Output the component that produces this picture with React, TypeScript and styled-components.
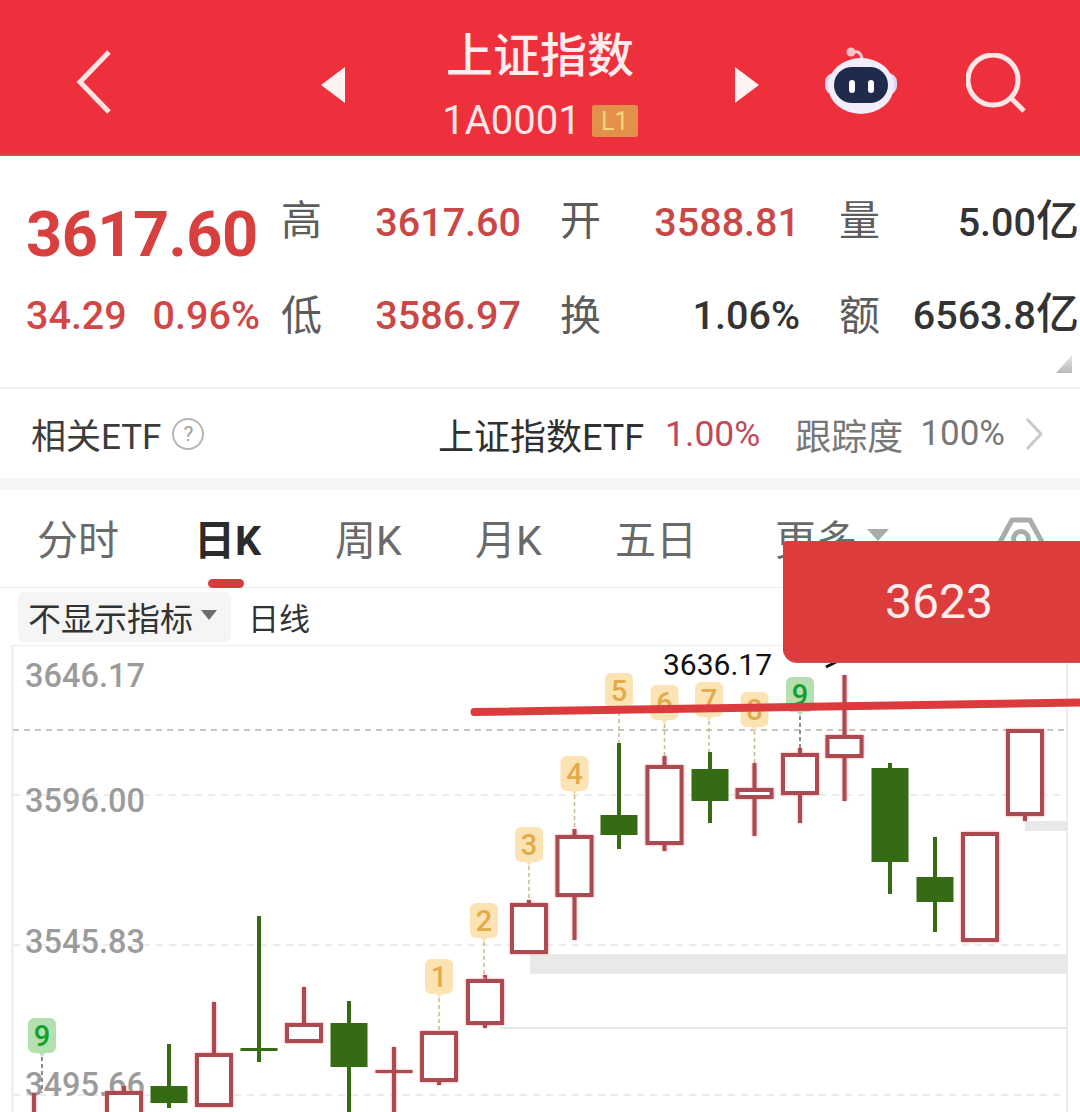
import React from 'react';
import styled, { createGlobalStyle } from 'styled-components';

const GlobalStyle = createGlobalStyle`
    html, body {
        margin: 0;
        padding: 0;
        background: #fff;
    }
    body {
        font-family: Roboto, "Noto Sans CJK SC", sans-serif;
    }
`;

const Page = styled.div`
    position: relative;
    width: 1080px;
    height: 1112px;
    overflow: hidden;
    background: #fff;
`;

const Header = styled.header`
    display: grid;
    grid-template-columns: 245px 24px 390px 90px 141px 1fr;
    align-items: center;
    height: 156px;
    padding: 14px 0 0 76px;
    box-sizing: border-box;
    background: #ee303c;
    box-shadow: inset 0 -2px 0 #d9474f;
`;

const Center = styled.div`
    display: flex;
    flex-direction: column;
    align-items: center;
    align-self: start;
    margin-top: 15px;
`;

const Title = styled.div`
    font-size: 47px;
    line-height: 54px;
    font-weight: 500;
    color: #fdeced;
`;

const CodeRow = styled.div`
    display: flex;
    align-items: center;
    gap: 11px;
    height: 40px;
    margin-top: 18px;
`;

const Code = styled.span`
    font-size: 40px;
    line-height: 40px;
    color: #fde6e7;
`;

const LevelBadge = styled.span`
    display: flex;
    align-items: center;
    justify-content: center;
    width: 46px;
    height: 32px;
    border-radius: 3px;
    background: #e3914a;
    color: #f6d57f;
    font-size: 25px;
`;

const Quote = styled.section`
    display: flex;
    flex-direction: column;
    height: 233px;
    padding: 20px 0 0 26px;
    box-sizing: border-box;
    border-bottom: 2px solid #f0f0f0;
    position: relative;
`;

const QuoteRow = styled.div<{ $height: number }>`
    display: flex;
    align-items: center;
    height: ${p => p.$height}px;
`;

const LeftCell = styled.div`
    display: flex;
    justify-content: space-between;
    width: 234px;
    margin-right: 21px;
`;

const BigPrice = styled.span`
    font-size: 63px;
    font-weight: 700;
    color: #d8403f;
    letter-spacing: -0.5px;
    margin-top: 24px;
`;

const SmallChange = styled.span`
    font-size: 39.5px;
    font-weight: 500;
    color: #d24645;
`;

const Pairs = styled.div`
    display: flex;
    gap: 39px;
`;

const Pair = styled.div`
    display: flex;
    align-items: center;
    justify-content: space-between;
    width: 240px;
`;

const PairLabel = styled.span<{ $lift: number }>`
    font-family: "Noto Sans CJK SC", sans-serif;
    font-size: 41px;
    line-height: 48px;
    padding-bottom: ${p => p.$lift}px;
    color: #5c5c5c;
`;

const PairValue = styled.span<{ $dark?: boolean }>`
    font-size: 39.5px;
    font-weight: 500;
    color: ${p => (p.$dark ? '#333' : '#c94747')};
    white-space: nowrap;
`;

const Unit = styled.span`
    font-size: 43px;
    line-height: 0;
`;

const ExpandCorner = styled.div`
    position: absolute;
    right: 8px;
    bottom: 14px;
    width: 16px;
    height: 18px;
    background: linear-gradient(180deg, #e6e6e6, #b9b9b9);
    clip-path: polygon(100% 0, 100% 100%, 0 100%);
`;

const EtfRow = styled.section`
    display: flex;
    align-items: center;
    height: 89px;
    padding: 0 37px 0 31px;
    box-sizing: border-box;
    font-size: 36px;
`;

const EtfLabel = styled.span`
    color: #3c3c3c;
    font-size: 35px;
`;

const Help = styled.span`
    display: flex;
    align-items: center;
    justify-content: center;
    width: 28px;
    height: 28px;
    margin-left: 11px;
    border: 2px solid #b5b5b5;
    border-radius: 50%;
    color: #a0a0a0;
    font-size: 21px;
`;

const EtfName = styled.span`
    margin-left: auto;
    color: #2f2f2f;
`;

const EtfRate = styled.span`
    margin-left: 21px;
    color: #c0485a;
    font-size: 35.5px;
`;

const EtfTrack = styled.span`
    margin-left: 35px;
    color: #777;
`;

const EtfPercent = styled.span`
    margin-left: 17px;
    color: #777;
    font-size: 35px;
`;

const Chevron = styled.svg`
    margin-left: 20px;
`;

const Strip = styled.div`
    height: 12px;
    background: #f5f5f5;
`;

const Tabs = styled.nav`
    display: grid;
    grid-template-columns: 157px 141px 140px 140px 160px 223px 1fr;
    align-items: center;
    height: 98px;
    padding-left: 37px;
    box-sizing: border-box;
    border-bottom: 1px solid #eee;
`;

const Tab = styled.span<{ $active?: boolean }>`
    position: relative;
    display: flex;
    align-items: center;
    font-size: 41px;
    line-height: 94px;
    height: 94px;
    padding-top: 4px;
    color: ${p => (p.$active ? '#2b2b2b' : '#6a6a6a')};
    font-weight: ${p => (p.$active ? 700 : 400)};
    ${p => p.$active && `
        &::after {
            content: '';
            position: absolute;
            left: 14px;
            bottom: 0;
            width: 36px;
            height: 9px;
            border-radius: 5px;
            background: #d63c3c;
        }
    `}
`;

const Caret = styled.span`
    width: 0;
    height: 0;
    margin: -12px 0 0 10px;
    border-left: 11px solid transparent;
    border-right: 11px solid transparent;
    border-top: 12px solid #ababab;
`;

const IndicatorRow = styled.div`
    display: flex;
    align-items: center;
    gap: 17px;
    height: 57px;
    padding-left: 18px;
    box-sizing: border-box;
`;

const Select = styled.div`
    display: flex;
    align-items: center;
    width: 213px;
    height: 50px;
    padding-left: 10px;
    box-sizing: border-box;
    border-radius: 6px;
    background: #f5f5f5;
    color: #333;
    font-size: 33px;
`;

const SelectCaret = styled.span`
    width: 0;
    height: 0;
    margin: -4px 0 0 8px;
    border-left: 8px solid transparent;
    border-right: 8px solid transparent;
    border-top: 10px solid #6e6e6e;
`;

const Period = styled.span`
    color: #333;
    font-size: 31px;
`;

const ChartSvg = styled.svg`
    display: block;
`;

const AxisText = styled.text`
    font-size: 32.5px;
    font-weight: 500;
    fill: #9b9b9b;
`;

const PeakText = styled.text`
    font-size: 30px;
    fill: #111;
`;

const MarkerText = styled.text<{ $green: boolean }>`
    font-size: 29px;
    font-weight: 500;
    text-anchor: middle;
    fill: ${p => (p.$green ? '#14a02e' : '#e2ab4a')};
`;

const RedCandle = styled.g`
    filter: drop-shadow(0 0 1px #f58d93);
`;

const PriceFlag = styled.div`
    position: absolute;
    left: 783px;
    top: 541px;
    display: flex;
    align-items: center;
    justify-content: center;
    width: 297px;
    height: 121px;
    padding-left: 15px;
    box-sizing: border-box;
    border-radius: 4px 0 0 14px;
    background: #dd3c3d;
    box-shadow: 0 1px 0 #b9595a;
    color: #fdeeee;
    font-size: 48px;
`;

type Candle = {
    x: number;
    top: number;
    bottom: number;
    hi?: number;
    lo?: number;
    up: boolean;
};

const candles: Candle[] = [
    { x: 34, top: 1125, bottom: 1130, hi: 1093, up: true },
    { x: 124, top: 1091, bottom: 1130, hi: 1086, up: true },
    { x: 169, top: 1086, bottom: 1103, hi: 1044, lo: 1108, up: false },
    { x: 214, top: 1053, bottom: 1107, hi: 1002, up: true },
    { x: 259, top: 1048, bottom: 1051, hi: 916, lo: 1062, up: false },
    { x: 304, top: 1023, bottom: 1043, hi: 987, up: true },
    { x: 349, top: 1023, bottom: 1067, hi: 1001, lo: 1112, up: false },
    { x: 394, top: 1070, bottom: 1073, hi: 1047, lo: 1112, up: true },
    { x: 439, top: 1031, bottom: 1082, lo: 1085, up: true },
    { x: 485, top: 979, bottom: 1025, hi: 975, lo: 1028, up: true },
    { x: 529, top: 903, bottom: 954, hi: 900, up: true },
    { x: 574.5, top: 835, bottom: 897, hi: 829, lo: 940, up: true },
    { x: 619, top: 815, bottom: 835, hi: 743, lo: 849, up: false },
    { x: 664.5, top: 765, bottom: 845, hi: 756, lo: 851, up: true },
    { x: 710, top: 769, bottom: 801, hi: 752, lo: 823, up: false },
    { x: 754.5, top: 788, bottom: 799, hi: 763, lo: 836, up: true },
    { x: 800, top: 753, bottom: 795, hi: 748, lo: 823, up: true },
    { x: 844.5, top: 735, bottom: 758, hi: 675, lo: 801, up: true },
    { x: 890, top: 768, bottom: 862, hi: 763, lo: 894, up: false },
    { x: 935, top: 877, bottom: 902, hi: 837, lo: 932, up: false },
    { x: 980, top: 832, bottom: 942, up: true },
    { x: 1025, top: 729, bottom: 816, lo: 821, up: true },
];

type Marker = { x: number; top: number; target: number; label: string; green?: boolean };

const markers: Marker[] = [
    { x: 42, top: 1018, target: 1093, label: '9', green: true },
    { x: 439, top: 959, target: 1031, label: '1' },
    { x: 484, top: 903, target: 979, label: '2' },
    { x: 529, top: 827, target: 900, label: '3' },
    { x: 574.5, top: 756, target: 829, label: '4' },
    { x: 619, top: 673, target: 743, label: '5' },
    { x: 664.5, top: 685, target: 756, label: '6' },
    { x: 709, top: 682, target: 752, label: '7' },
    { x: 754.5, top: 692, target: 763, label: '8' },
    { x: 800, top: 677, target: 748, label: '9', green: true },
];

const axisLabels = [
    { y: 687, text: '3646.17' },
    { y: 812, text: '3596.00' },
    { y: 953, text: '3545.83' },
    { y: 1096, text: '3495.66' },
];

const RED = '#ab4a50';
const GREEN = '#356b14';

const CandleMark = ({ c }: { c: Candle }) => {
    const color = c.up ? RED : GREEN;
    const hollow = c.up && c.bottom - c.top >= 6;
    const Group = c.up ? RedCandle : 'g';
    return (
        <Group>
            {(c.hi !== undefined || c.lo !== undefined) && (
                <line
                    x1={c.x}
                    x2={c.x}
                    y1={c.hi ?? c.top}
                    y2={c.lo ?? c.bottom}
                    stroke={color}
                    strokeWidth={4}
                />
            )}
            {hollow ? (
                <rect
                    x={c.x - 17}
                    y={c.top + 2}
                    width={34}
                    height={c.bottom - c.top - 4}
                    fill='#fff'
                    stroke={color}
                    strokeWidth={4}
                />
            ) : (
                <rect x={c.x - 18.5} y={c.top} width={37} height={c.bottom - c.top} fill={color} />
            )}
        </Group>
    );
};

const MarkerMark = ({ m }: { m: Marker }) => {
    const h = 35;
    const left = m.x - 14;
    const tip = m.top + h + 4;
    return (
        <g>
            <line
                x1={m.x}
                x2={m.x}
                y1={tip}
                y2={m.target}
                stroke={m.green ? '#666' : '#c9b98d'}
                strokeWidth={1.5}
                strokeDasharray='4 3'
            />
            <path
                d={`M${left + 6} ${m.top}h16a6 6 0 0 1 6 6v${h - 12}a6 6 0 0 1 -6 6h-5l-3 4l-3 -4h-5a6 6 0 0 1 -6 -6v-${h - 12}a6 6 0 0 1 6 -6z`}
                fill={m.green ? '#b4e0b0' : '#fce3b4'}
            />
            <MarkerText $green={!!m.green} x={m.x} y={m.top + 28}>
                {m.label}
            </MarkerText>
        </g>
    );
};

const Chart = () => (
    <ChartSvg width={1080} height={467} viewBox='0 645 1080 467'>
        <line x1={12} x2={1067} y1={645.5} y2={645.5} stroke='#eee' strokeWidth={1} />
        <line x1={12.5} x2={12.5} y1={645} y2={1112} stroke='#ececec' strokeWidth={2} />
        <line x1={1067} x2={1067} y1={645} y2={1112} stroke='#ececec' strokeWidth={2} />
        <line x1={13} x2={1066} y1={730} y2={730} stroke='#b5b5a8' strokeWidth={1.5} strokeDasharray='6 5' />
        <line x1={13} x2={1066} y1={795} y2={795} stroke='#e6e6e6' strokeWidth={1.5} strokeDasharray='7 6' />
        <line x1={13} x2={1066} y1={945} y2={945} stroke='#e6e6e6' strokeWidth={1.5} strokeDasharray='7 6' />
        <line x1={13} x2={1066} y1={1095} y2={1095} stroke='#e6e6e6' strokeWidth={1.5} strokeDasharray='7 6' />
        <rect x={530} y={954} width={538} height={20} fill='#e9e9e9' />
        <rect x={1025} y={821} width={43} height={10} fill='#e9e9e9' />
        <rect x={500} y={1027} width={567} height={2} fill='#e8e8e8' />
        {axisLabels.map(a => (
            <AxisText key={a.text} x={25} y={a.y}>{a.text}</AxisText>
        ))}
        {candles.map(c => (
            <CandleMark key={c.x} c={c} />
        ))}
        {markers.map(m => (
            <MarkerMark key={`${m.x}-${m.label}`} m={m} />
        ))}
        <PeakText x={663} y={675}>3636.17</PeakText>
        <path d='M826 667L838 661' stroke='#111' strokeWidth={3} />
        <path d='M474.5 712L1080 702.5' stroke='#dc3b3e' strokeWidth={8} strokeLinecap='round' />
    </ChartSvg>
);

const BackIcon = () => (
    <svg width={36} height={64} viewBox='0 0 36 64' style={{ marginTop: -6 }}>
        <path d='M33 2L4 32L33 62' fill='none' stroke='#fde3e3' strokeWidth={5} />
    </svg>
);

const TriangleIcon = ({ dir }: { dir: 'left' | 'right' }) => (
    <svg width={24} height={36} viewBox='0 0 24 36'>
        <path d={dir === 'left' ? 'M24 0V36L0 18Z' : 'M0 0V36L24 18Z'} fill='#fdf3f3' />
    </svg>
);

const RobotIcon = () => (
    <svg width={72} height={68} viewBox='0 0 72 68' style={{ marginTop: -8 }}>
        <path d='M27 7C30 3 36 4 37 12' fill='none' stroke='#f3c9d0' strokeWidth={3} />
        <circle cx={26} cy={5} r={4.5} fill='#f5c3c8' />
        <rect x={0} y={26} width={72} height={22} rx={9} fill='#dcd6f3' />
        <ellipse cx={36} cy={39} rx={33} ry={28} fill='#f1edfb' />
        <rect x={9} y={20} width={54} height={36} rx={18} fill='#1f2a4d' />
        <rect x={24} y={33} width={6} height={13} rx={3} fill='#fff' />
        <rect x={43} y={33} width={6} height={13} rx={3} fill='#fff' />
    </svg>
);

const SearchIcon = () => (
    <svg width={62} height={64} viewBox='0 0 62 64'>
        <circle cx={27} cy={27} r={25} fill='none' stroke='#ffe6e6' strokeWidth={5} />
        <path d='M46 46L58 58' stroke='#ffe6e6' strokeWidth={5} />
    </svg>
);

const SettingsIcon = () => (
    <svg width={46} height={48} viewBox='0 0 46 48' style={{ alignSelf: 'start', marginTop: 27 }}>
        <path
            d='M14 3H32L44 25L32 47H14L2 25Z'
            fill='none'
            stroke='#ababab'
            strokeWidth={5}
            strokeLinejoin='round'
        />
        <circle cx={23} cy={22} r={7.5} fill='none' stroke='#ababab' strokeWidth={5} />
    </svg>
);

const App = () => (
    <Page>
        <GlobalStyle />
        <Header>
            <BackIcon />
            <TriangleIcon dir='left' />
            <Center>
                <Title>上证指数</Title>
                <CodeRow>
                    <Code>1A0001</Code>
                    <LevelBadge>L1</LevelBadge>
                </CodeRow>
            </Center>
            <TriangleIcon dir='right' />
            <RobotIcon />
            <SearchIcon />
        </Header>
        <Quote>
            <QuoteRow $height={92}>
                <LeftCell>
                    <BigPrice>3617.60</BigPrice>
                </LeftCell>
                <Pairs>
                    <Pair>
                        <PairLabel $lift={11}>高</PairLabel>
                        <PairValue>3617.60</PairValue>
                    </Pair>
                    <Pair>
                        <PairLabel $lift={11}>开</PairLabel>
                        <PairValue>3588.81</PairValue>
                    </Pair>
                    <Pair>
                        <PairLabel $lift={11}>量</PairLabel>
                        <PairValue $dark>5.00<Unit>亿</Unit></PairValue>
                    </Pair>
                </Pairs>
            </QuoteRow>
            <QuoteRow $height={94}>
                <LeftCell>
                    <SmallChange>34.29</SmallChange>
                    <SmallChange>0.96%</SmallChange>
                </LeftCell>
                <Pairs>
                    <Pair>
                        <PairLabel $lift={6}>低</PairLabel>
                        <PairValue>3586.97</PairValue>
                    </Pair>
                    <Pair>
                        <PairLabel $lift={6}>换</PairLabel>
                        <PairValue $dark>1.06%</PairValue>
                    </Pair>
                    <Pair>
                        <PairLabel $lift={6}>额</PairLabel>
                        <PairValue $dark>6563.8<Unit>亿</Unit></PairValue>
                    </Pair>
                </Pairs>
            </QuoteRow>
            <ExpandCorner />
        </Quote>
        <EtfRow>
            <EtfLabel>相关ETF</EtfLabel>
            <Help>?</Help>
            <EtfName>上证指数ETF</EtfName>
            <EtfRate>1.00%</EtfRate>
            <EtfTrack>跟踪度</EtfTrack>
            <EtfPercent>100%</EtfPercent>
            <Chevron width={18} height={32} viewBox='0 0 18 32'>
                <path d='M2 1L16 16L2 31' fill='none' stroke='#c8c8c8' strokeWidth={3} />
            </Chevron>
        </EtfRow>
        <Strip />
        <Tabs>
            <Tab>分时</Tab>
            <Tab $active>日K</Tab>
            <Tab>周K</Tab>
            <Tab>月K</Tab>
            <Tab>五日</Tab>
            <Tab>更多<Caret /></Tab>
            <SettingsIcon />
        </Tabs>
        <IndicatorRow>
            <Select>
                不显示指标
                <SelectCaret />
            </Select>
            <Period>日线</Period>
        </IndicatorRow>
        <Chart />
        <PriceFlag>3623</PriceFlag>
    </Page>
);

export default App;
